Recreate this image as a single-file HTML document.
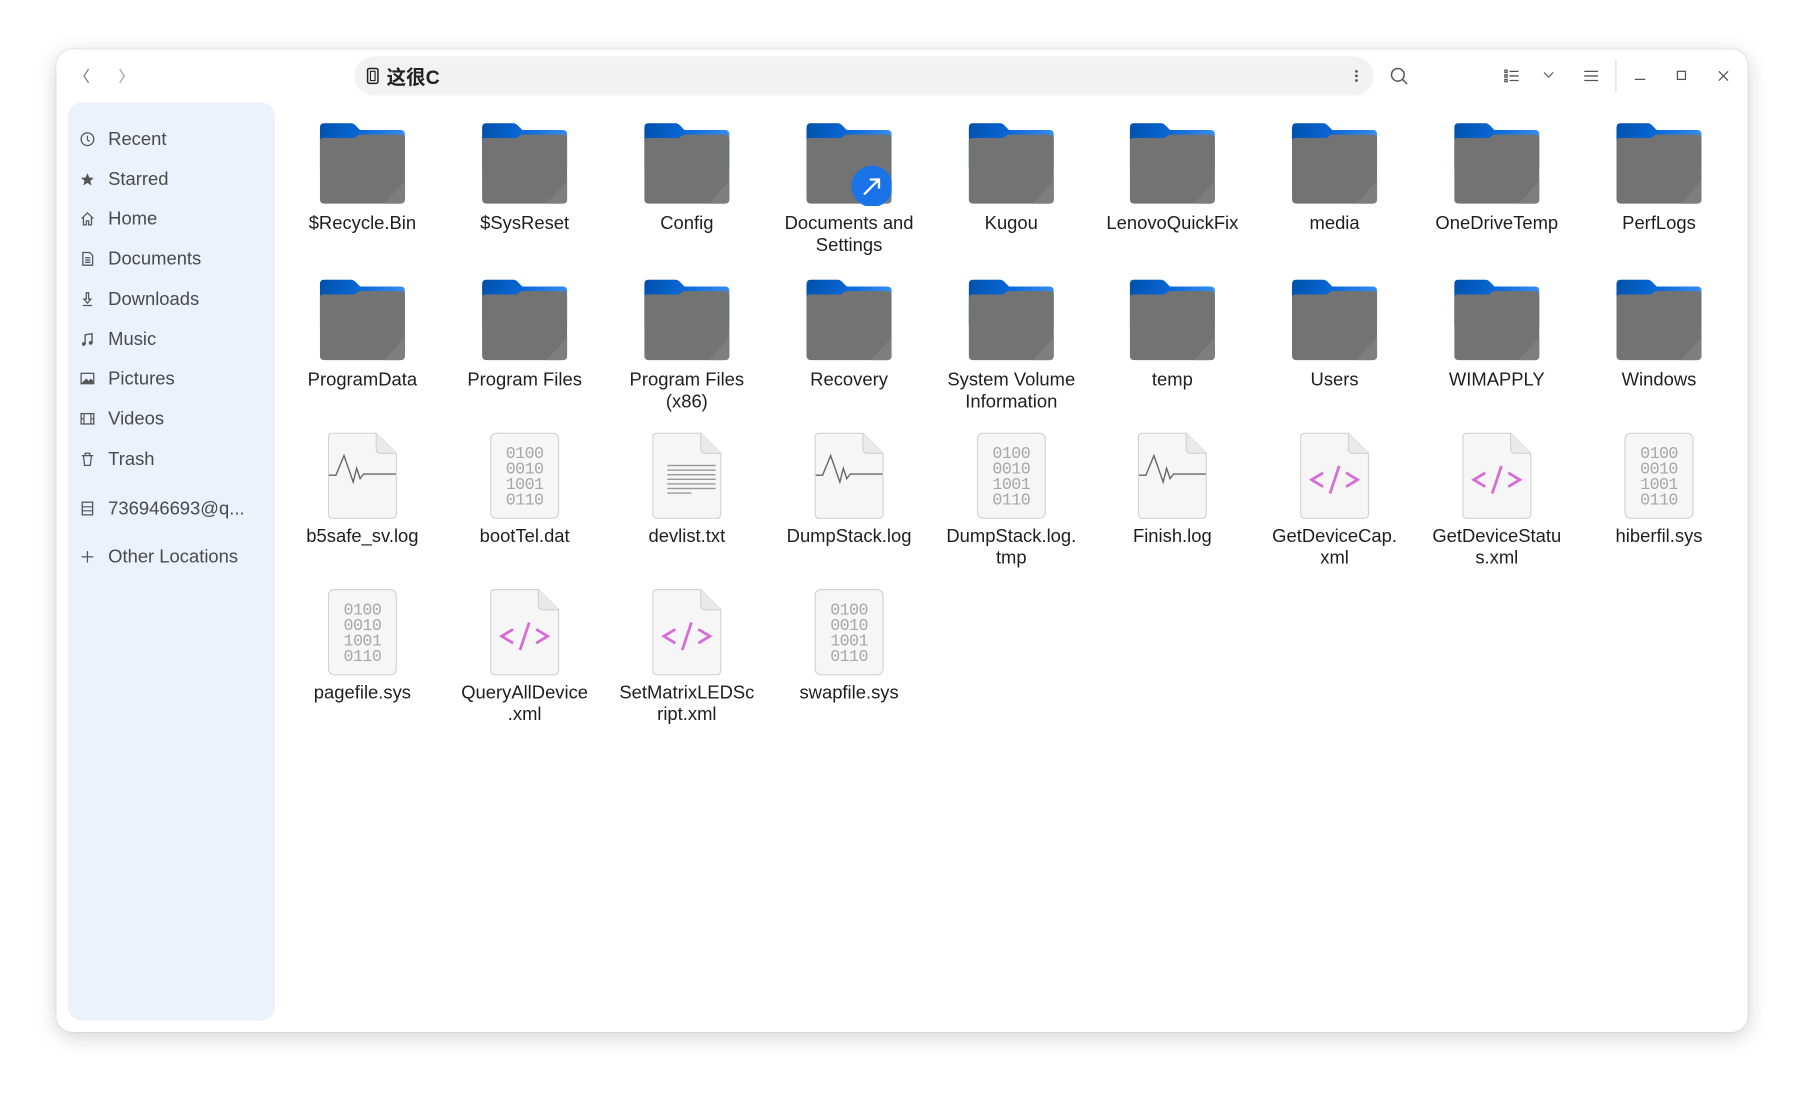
<!DOCTYPE html>
<html><head><meta charset="utf-8"><style>
html,body{margin:0;padding:0;background:#fff;overflow:hidden}
#s{position:absolute;left:0;top:0;width:1568px;height:953px;transform:scale(1.1505);transform-origin:0 0;font-family:"Liberation Sans","Noto Sans CJK SC",sans-serif}
.win{position:absolute;left:49px;top:43px;width:1470px;height:854px;background:#fff;border-radius:14px;box-shadow:0 4px 18px rgba(0,0,0,.18),0 0 2px rgba(0,0,0,.1)}
.abs{position:absolute}
.side{position:absolute;left:59px;top:89px;width:180px;height:798px;background:#ebf2fc;border-radius:12px}
.si{position:absolute;left:94px;font-size:16px;color:#4a4a4a;line-height:20px;margin-top:2px}
.sic{position:absolute;left:69px;width:14px;height:14px;margin-top:1px}
.it{position:absolute;width:136px;text-align:center}
.lb{position:absolute;left:0;width:136px;font-size:16px;line-height:19px;color:#1e1e1e;text-align:center}
.path{position:absolute;left:308px;top:49px;width:886px;height:34px;background:#f2f2f2;border-radius:17px}
</style></head><body><div id="s">
<div class="win"></div>
<svg class="abs" style="left:66px;top:58px" width="50" height="16"><path d="M11 2 L7 8 L11 14" fill="none" stroke="#888" stroke-width="1.2"/><path d="M38 2 L42 8 L38 14" fill="none" stroke="#aaa" stroke-width="1.2"/></svg>
<div class="path"></div>
<svg class="abs" style="left:318px;top:58px" width="12" height="16"><rect x="1.5" y="1.5" width="9" height="13" rx="1.5" fill="none" stroke="#222" stroke-width="1.3"/><rect x="4" y="4" width="4" height="8" fill="none" stroke="#222" stroke-width="1"/></svg>
<div class="abs" style="left:336px;top:57px;font-size:17px;font-weight:bold;color:#222;line-height:22px">这很C</div>
<svg class="abs" style="left:1175px;top:58px" width="8" height="16"><circle cx="4" cy="4" r="1.2" fill="#555"/><circle cx="4" cy="8" r="1.2" fill="#555"/><circle cx="4" cy="12" r="1.2" fill="#555"/></svg>
<svg class="abs" style="left:1207px;top:57px" width="18" height="18"><circle cx="8" cy="8" r="5.5" fill="none" stroke="#555" stroke-width="1.3"/><path d="M12 12 L16 16" stroke="#555" stroke-width="1.3"/></svg>
<svg class="abs" style="left:1306px;top:58px" width="18" height="16"><g fill="none" stroke="#555" stroke-width="1.1"><rect x="2" y="3" width="2" height="2"/><rect x="2" y="7" width="2" height="2"/><rect x="2" y="11" width="2" height="2"/><path d="M6 4H14M6 8H14M6 12H14"/></g></svg>
<svg class="abs" style="left:1340px;top:60px" width="12" height="10"><path d="M2 3 L6 7 L10 3" fill="none" stroke="#666" stroke-width="1.1"/></svg>
<svg class="abs" style="left:1375px;top:58px" width="16" height="16"><path d="M2 4H14M2 8H14M2 12H14" stroke="#555" stroke-width="1.1"/></svg>
<div class="abs" style="left:1404px;top:52px;width:1px;height:28px;background:#ddd"></div>
<svg class="abs" style="left:1418px;top:58px" width="16" height="16"><path d="M3 11H12" stroke="#555" stroke-width="1.1"/></svg>
<svg class="abs" style="left:1454px;top:58px" width="16" height="16"><rect x="4" y="4" width="7" height="7" fill="none" stroke="#555" stroke-width="1.1"/></svg>
<svg class="abs" style="left:1490px;top:58px" width="16" height="16"><path d="M4 4L12 12M12 4L4 12" stroke="#555" stroke-width="1.1"/></svg>

<div class="side"></div>
<svg class="sic" style="top:113px" viewBox="0 0 14 14"><circle cx="7" cy="7" r="5.5" fill="none" stroke="#555" stroke-width="1.1"/><path d="M7 4V7.5L9 9" fill="none" stroke="#555" stroke-width="1.1"/></svg><div class="si" style="top:110px">Recent</div>
<svg class="sic" style="top:148px" viewBox="0 0 14 14"><path d="M7 1.5L8.6 5.3 12.6 5.6 9.5 8.2 10.5 12.2 7 10 3.5 12.2 4.5 8.2 1.4 5.6 5.4 5.3Z" fill="#555"/></svg><div class="si" style="top:145px">Starred</div>
<svg class="sic" style="top:182px" viewBox="0 0 14 14"><path d="M2 7L7 2 12 7M3.5 6V12.5H6V9H8V12.5H10.5V6" fill="none" stroke="#555" stroke-width="1.1"/></svg><div class="si" style="top:179px">Home</div>
<svg class="sic" style="top:217px" viewBox="0 0 14 14"><path d="M3 1.5H9L11.5 4V12.5H3Z M5 6H9.5M5 8H9.5M5 10H9.5" fill="none" stroke="#555" stroke-width="1.1"/></svg><div class="si" style="top:214px">Documents</div>
<svg class="sic" style="top:252px" viewBox="0 0 14 14"><path d="M6 1.5H8V7H10L7 10.5 4 7H6Z M3 12.5H11" fill="none" stroke="#555" stroke-width="1.1"/></svg><div class="si" style="top:249px">Downloads</div>
<svg class="sic" style="top:287px" viewBox="0 0 14 14"><path d="M5 11V3L11 2V10" fill="none" stroke="#555" stroke-width="1.2"/><circle cx="3.8" cy="11" r="1.6" fill="#555"/><circle cx="9.8" cy="10" r="1.6" fill="#555"/></svg><div class="si" style="top:284px">Music</div>
<svg class="sic" style="top:321px" viewBox="0 0 14 14"><rect x="1.5" y="2.5" width="11" height="9" fill="none" stroke="#555" stroke-width="1.1"/><path d="M2 11L6 7 8 9 10 7 12 9V11Z" fill="#555"/></svg><div class="si" style="top:318px">Pictures</div>
<svg class="sic" style="top:356px" viewBox="0 0 14 14"><rect x="1.5" y="2.5" width="11" height="9" fill="none" stroke="#555" stroke-width="1.1"/><path d="M4 2.5V11.5M10 2.5V11.5M1.5 7H4M10 7H12.5" stroke="#555" stroke-width="1"/></svg><div class="si" style="top:353px">Videos</div>
<svg class="sic" style="top:391px" viewBox="0 0 14 14"><path d="M2 4H12M5 4V2H9V4M3.5 4L4.5 12.5H9.5L10.5 4" fill="none" stroke="#555" stroke-width="1.1"/></svg><div class="si" style="top:388px">Trash</div>
<svg class="sic" style="top:434px" viewBox="0 0 14 14"><rect x="2.5" y="1.5" width="9" height="11" fill="none" stroke="#555" stroke-width="1.1"/><path d="M2.5 5.5H11.5M2.5 9H11.5" stroke="#555" stroke-width="1"/></svg><div class="si" style="top:431px">736946693@q...</div>
<svg class="sic" style="top:476px" viewBox="0 0 14 14"><path d="M7 2V12M2 7H12" stroke="#555" stroke-width="1.1"/></svg><div class="si" style="top:473px">Other Locations</div>

<svg width="0" height="0" style="position:absolute"><defs>
<linearGradient id="bl" x1="0" y1="0" x2="1" y2="0.3"><stop offset="0" stop-color="#0050a8"/><stop offset="0.5" stop-color="#0a68d8"/><stop offset="1" stop-color="#3a8ff0"/></linearGradient>
<g id="fold"><path d="M4 0H27Q29 0 31 2L35 6H70Q74 6 74 10V40H0V4Q0 0 4 0Z" fill="url(#bl)"/><path d="M3 13H30L34 10H70Q74 10 74 14V66Q74 70 70 70H4Q0 70 0 66V16Q0 13 3 13Z" fill="#737373"/><path d="M74 50V66Q74 70 70 70H56Z" fill="#7e7e7e"/></g>
<path id="pg" d="M4 .5H42L59.5 18V70.5Q59.5 74.5 55.5 74.5H4Q.5 74.5 .5 70.5V4Q.5 .5 4 .5Z" fill="#f6f6f6" stroke="#d2d2d2"/>
<path id="cor" d="M42 .5V14Q42 18 46 18H59.5" fill="#eaeaea" stroke="#d2d2d2"/>
</defs></svg>
<div id="grid"></div>
<script>
var cx=[315,456,597,738,879,1019,1160,1301,1442];
var rows=[
[["f","$Recycle.Bin"],["f","$SysReset"],["f","Config"],["l","Documents and<br>Settings"],["f","Kugou"],["f","LenovoQuickFix"],["f","media"],["f","OneDriveTemp"],["f","PerfLogs"]],
[["f","ProgramData"],["f","Program Files"],["f","Program Files<br>(x86)"],["f","Recovery"],["f","System Volume<br>Information"],["f","temp"],["f","Users"],["f","WIMAPPLY"],["f","Windows"]],
[["g","b5safe_sv.log"],["b","bootTel.dat"],["t","devlist.txt"],["g","DumpStack.log"],["b","DumpStack.log.<br>tmp"],["g","Finish.log"],["x","GetDeviceCap.<br>xml"],["x","GetDeviceStatu<br>s.xml"],["b","hiberfil.sys"]],
[["b","pagefile.sys"],["x","QueryAllDevice<br>.xml"],["x","SetMatrixLEDSc<br>ript.xml"],["b","swapfile.sys"]]];
var tops=[107,243,376,512];
var h="";
function icon(t){
 if(t=="f"||t=="l"){var s='<svg width="74" height="72" style="position:absolute;left:31px;top:0"><use href="#fold"/>';
  if(t=="l")s+='<circle cx="57" cy="55" r="18" fill="#1a73e8"/><path d="M50 62L63 49M55 49H63V57" fill="none" stroke="#fff" stroke-width="2"/>';
  return s+'</svg>';}
 var s='<svg width="62" height="76" style="position:absolute;left:38px;top:0">';
 if(t=="b"){s+='<rect x=".5" y=".5" width="59" height="74" rx="5" fill="#f6f6f6" stroke="#d2d2d2"/>';
  var r=["0100","0010","1001","0110"];for(var i=0;i<4;i++)s+='<text x="30" y="'+(22+i*13.5)+'" text-anchor="middle" font-family="Liberation Mono,monospace" font-size="14.5" fill="#a8a8a8" letter-spacing="-0.5">'+r[i]+'</text>';}
 else{s+='<use href="#pg"/><use href="#cor"/>';
  if(t=="g")s+='<path d="M1 37H7L14 20 22 43 25 31 28 40 31 36H59" fill="none" stroke="#666" stroke-width="1.2"/>';
  if(t=="t"){for(var i=0;i<7;i++)s+='<rect x="13" y="'+(28+i*4)+'" width="'+(i==6?21:42)+'" height="1.2" fill="#999"/>';}
  if(t=="x")s+='<path d="M20 35L10 41 20 47M40 35L50 41 40 47M34 29L26 53" fill="none" stroke="#d96bd6" stroke-width="2.4"/>';}
 return s+'</svg>';
}
for(var r=0;r<rows.length;r++)for(var c=0;c<rows[r].length;c++){
 var it=rows[r][c];
 h+='<div class="it" style="left:'+(cx[c]-68)+'px;top:'+tops[r]+'px">'+icon(it[0])+'<div class="lb" style="top:'+(r<2?78:81)+'px">'+it[1]+'</div></div>';
}
document.getElementById("grid").innerHTML=h;
</script>
</div></body></html>
